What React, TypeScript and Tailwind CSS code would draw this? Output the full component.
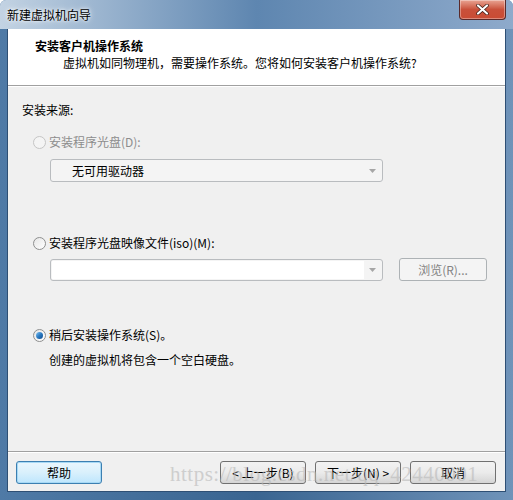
import React from 'react';

const cjk = { fontFamily: '"Noto Sans CJK SC", "Microsoft YaHei", sans-serif' };

function Radio({ checked, disabled }: { checked?: boolean; disabled?: boolean }) {
  return (
    <span
      className={`relative inline-flex w-[13px] h-[13px] rounded-full border items-center justify-center ${
        disabled ? 'border-[#c5c5c5] bg-[#f4f4f4]' : 'border-[#8e8f8f] bg-gradient-to-br from-[#e6e6e6] to-[#ffffff]'
      }`}
    >
      {checked && (
        <span className="w-[7px] h-[7px] rounded-full bg-gradient-to-br from-[#7fc4f4] via-[#2a7ac2] to-[#114c8c]" />
      )}
    </span>
  );
}

function Combo({ text, wide }: { text?: string; wide?: boolean }) {
  return (
    <div
      className={`flex items-center w-[333px] ${wide ? 'h-[23px]' : 'h-[22px]'} rounded-[3px] border border-[#b9bcbf] bg-[#f4f4f4]`}
    >
      {text ? (
        <span className="flex-1 pl-[21px] text-[12px] text-black leading-none">{text}</span>
      ) : (
        <span className="w-[312px] h-[18px] bg-white ml-[1px] mr-auto" />
      )}
      <svg width="17" height="8" viewBox="0 0 17 8" className="shrink-0">
        <path d="M4 2h7l-3.5 4z" fill="#a6a6a6" />
      </svg>
    </div>
  );
}

function Button({ label, primary, disabled, w = 'w-[86px]' }: { label: React.ReactNode; primary?: boolean; disabled?: boolean; w?: string }) {
  let cls = 'border-[#707070] bg-gradient-to-b from-[#f2f2f2] via-[#ebebeb] to-[#d5d5d5] text-black';
  if (primary) cls = 'border-[#3c7fb1] bg-gradient-to-b from-[#eaf6fd] via-[#d9f0fc] to-[#bee6fd] text-black shadow-[inset_0_0_0_1px_#a7d9f5]';
  if (disabled) cls = 'border-[#adb2b5] bg-[#f4f4f4] text-[#838383]';
  return (
    <div className={`${w} h-[23px] rounded-[3px] border flex items-center justify-center text-[12px] ${cls}`}>
      {label}
    </div>
  );
}

export default function App() {
  return (
    <div
      className="relative w-[513px] h-[500px] flex flex-col rounded-t-[6px] bg-gradient-to-r from-[#4f7aa6] via-[#3a6591] to-[#6f93b9] overflow-hidden"
      style={cjk}
    >
      {/* title bar */}
      <div className="h-[29px] flex items-start relative bg-gradient-to-r from-[#c3d3e3] via-[#5e86b0] to-[#8eaacb]">
        <span className="pl-[7px] pt-[7px] text-[12px] leading-[16px] text-black [text-shadow:0_0_6px_#ffffff,0_0_3px_#ffffff]">
          新建虚拟机向导
        </span>
        <div className="ml-auto mr-[7px] w-[47px] h-[20px] rounded-b-[4px] border border-t-0 border-[#5a2a2a] bg-gradient-to-b from-[#e8a493] via-[#c9503a] to-[#c94b34] flex items-center justify-center shadow-[inset_0_0_0_1px_rgba(255,255,255,0.35)]">
          <svg width="13" height="11" viewBox="0 0 13 11">
            <path d="M2 1.5l9 8M11 1.5l-9 8" stroke="#3b1b15" strokeWidth="3.6" strokeLinecap="round" />
            <path d="M2 1.5l9 8M11 1.5l-9 8" stroke="#ffffff" strokeWidth="2.2" strokeLinecap="round" />
          </svg>
        </div>
      </div>

      {/* client */}
      <div className="flex-1 mx-[7px] mb-[8px] flex flex-col bg-[#f0f0f0] border-l border-r border-b border-[#2e4f74]">
        {/* header */}
        <div className="h-[57px] bg-white border-b border-[#a0a0a0] flex flex-col">
          <div className="pl-[27px] pt-[9px] text-[12px] leading-[16px] font-bold text-black">安装客户机操作系统</div>
          <div className="pl-[55px] pt-[1px] text-[12px] leading-[16px] text-black">
            虚拟机如同物理机，需要操作系统。您将如何安装客户机操作系统?
          </div>
        </div>
        <div className="h-px bg-white" />

        {/* body */}
        <div className="flex-1 flex flex-col pl-[14px] text-[12px] leading-[16px]">
          <div className="mt-[15px] text-black">安装来源:</div>

          <div className="mt-[16px] ml-[11px] flex items-center gap-[3px] text-[#8d8d8d]">
            <Radio disabled />
            <span>安装程序光盘(D):</span>
          </div>
          <div className="mt-[9px] ml-[28px]">
            <Combo text="无可用驱动器" wide />
          </div>

          <div className="mt-[53px] ml-[11px] flex items-center gap-[3px] text-black">
            <Radio />
            <span>安装程序光盘映像文件(iso)(M):</span>
          </div>
          <div className="mt-[7px] ml-[28px] flex items-center gap-[16px]">
            <Combo />
            <Button label="浏览(R)..." disabled w="w-[88px]" />
          </div>

          <div className="mt-[46px] ml-[11px] flex items-center gap-[3px] text-black">
            <Radio checked />
            <span>稍后安装操作系统(S)。</span>
          </div>
          <div className="mt-[9px] ml-[27px] text-black">创建的虚拟机将包含一个空白硬盘。</div>
        </div>

        {/* footer */}
        <div className="border-t border-[#a0a0a0] shadow-[inset_0_1px_0_#ffffff] h-[40px] flex items-start pt-[9px] pl-[8px] pr-[9px]">
          <Button label="帮助" primary />
          <div className="ml-auto flex gap-[9px]">
            <Button label="< 上一步(B)" />
            <Button label="下一步(N) >" />
            <Button label="取消" />
          </div>
        </div>
      </div>

      {/* csdn watermark */}
      <div
        className="absolute left-[170px] top-[462px] pointer-events-none text-[21px] leading-[24px] text-[#b8b8b8] opacity-60 tracking-[0.5px]"
        style={{ fontFamily: '"Liberation Serif", serif' }}
      >
        https://blog.csdn.net/qq_42440001
      </div>
    </div>
  );
}
